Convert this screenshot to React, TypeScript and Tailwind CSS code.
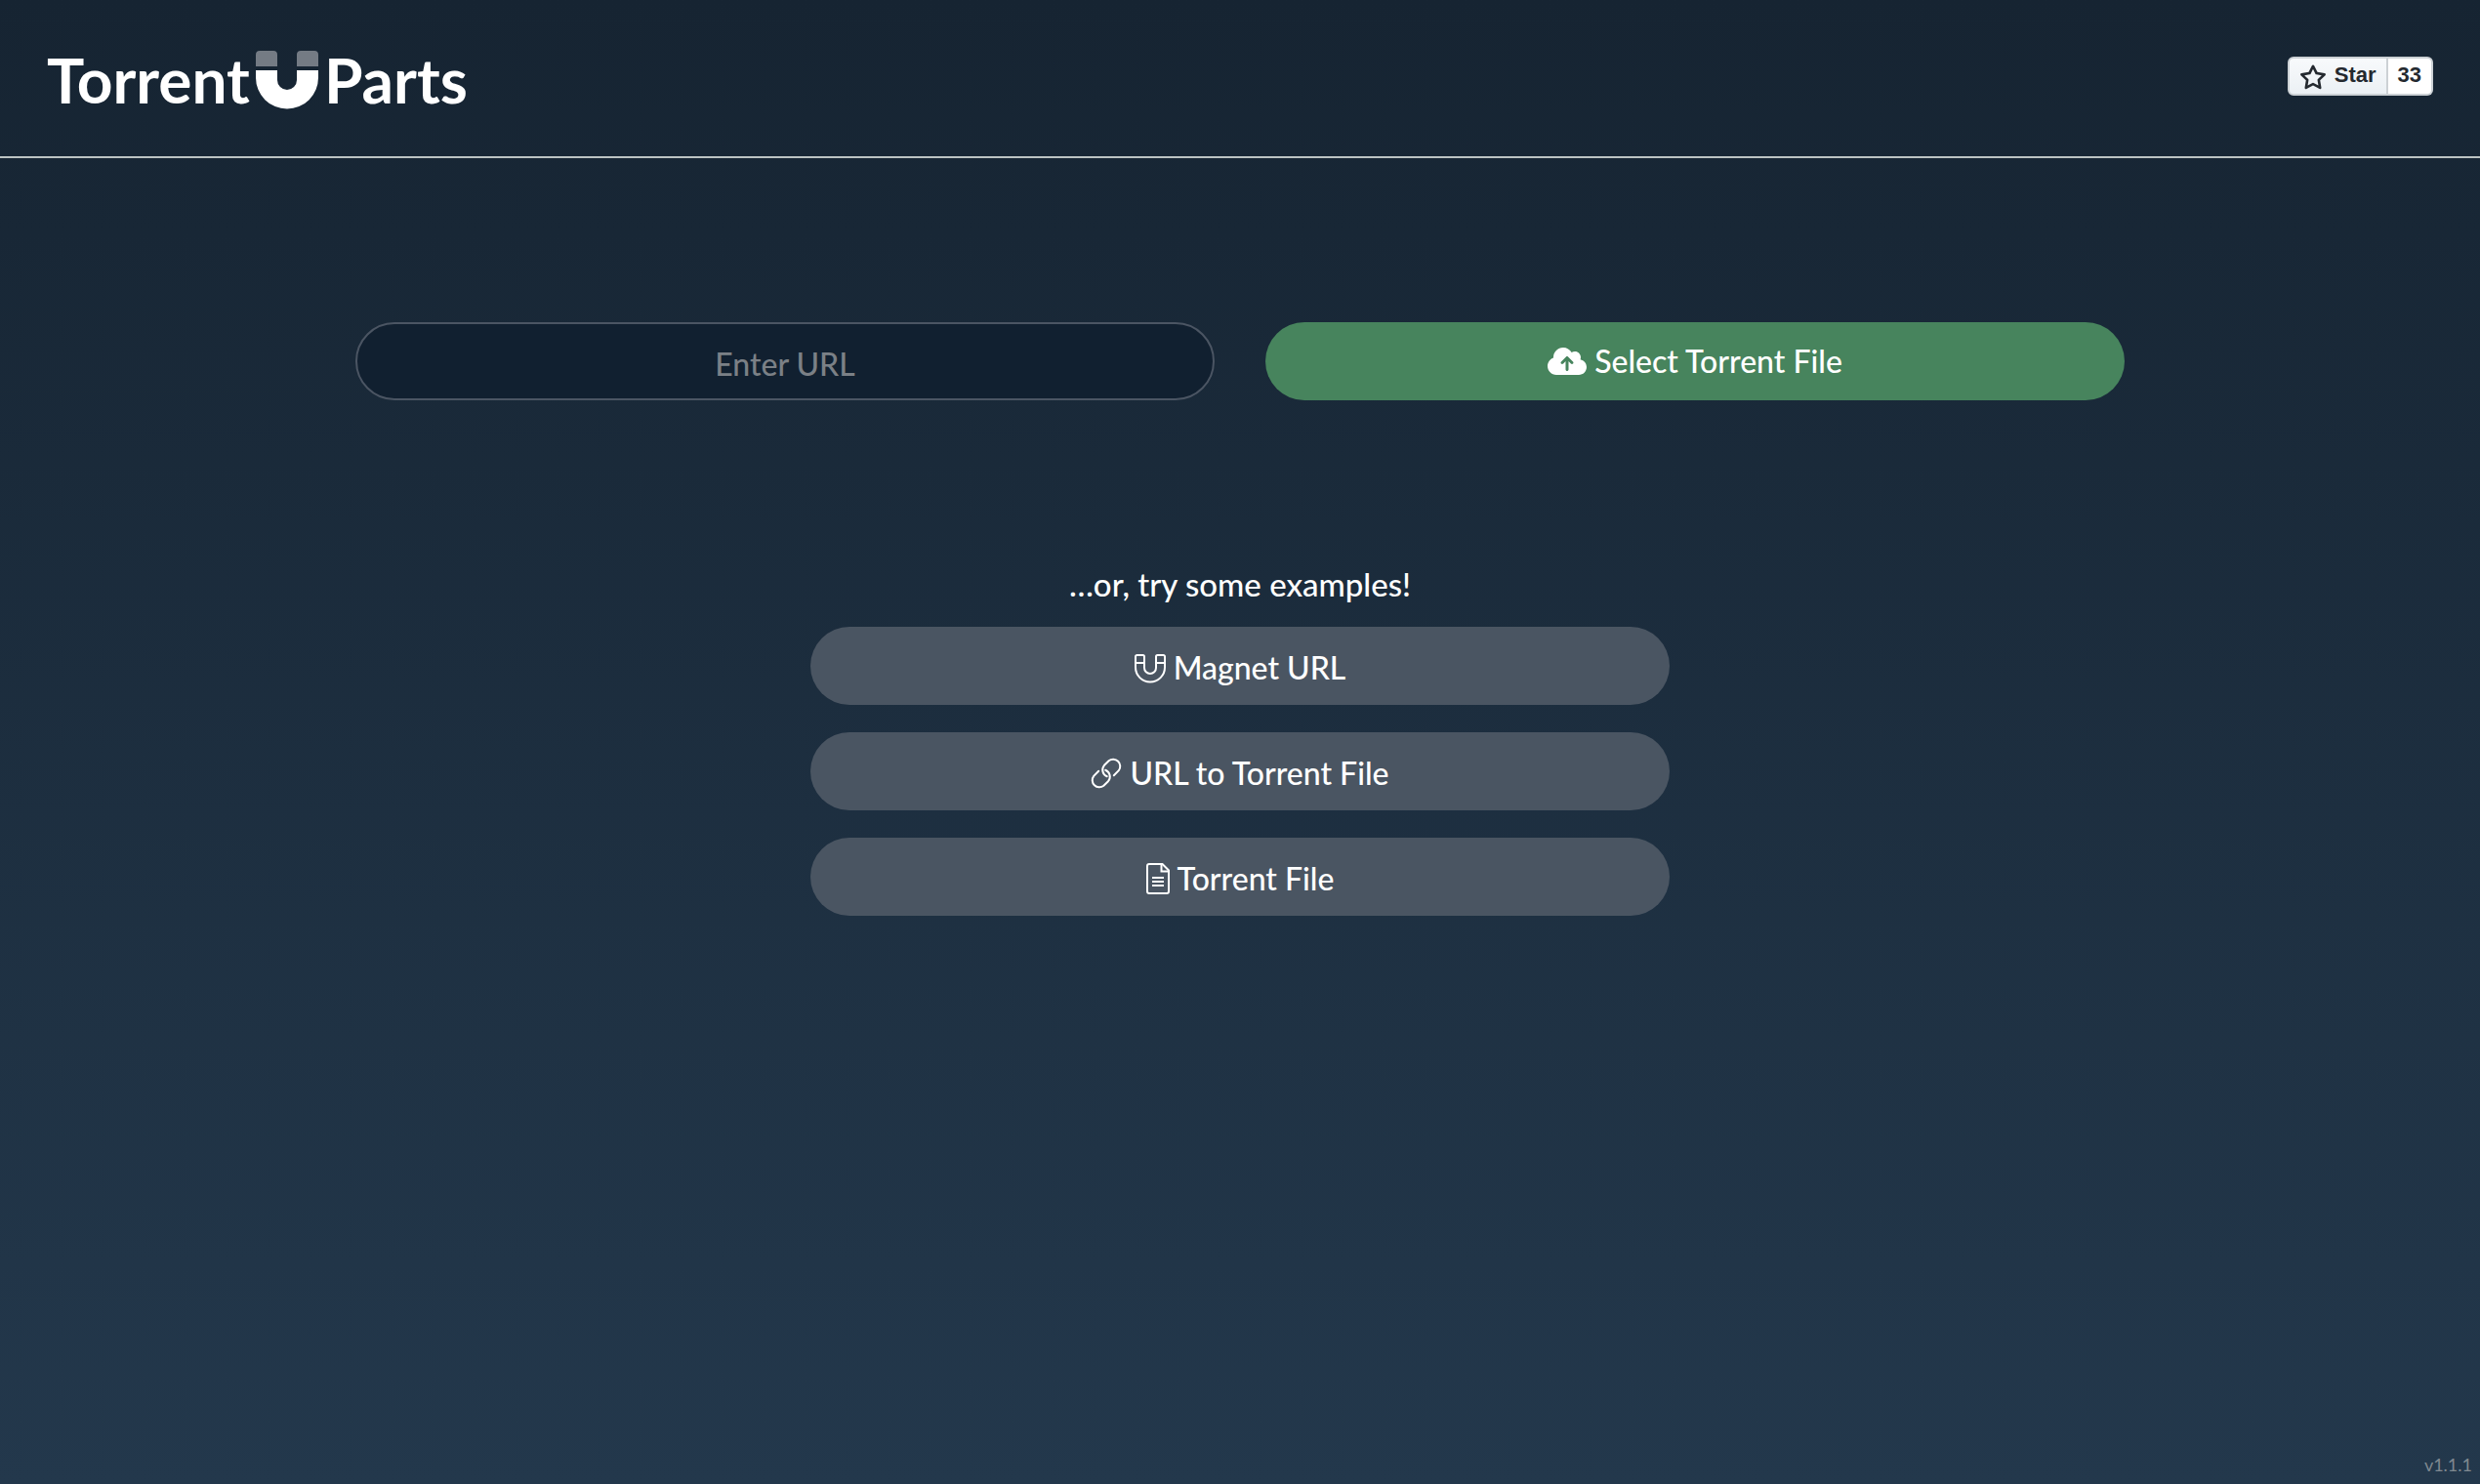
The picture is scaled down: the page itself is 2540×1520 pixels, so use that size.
import React, { useRef, useState } from 'react';
import { FaCloudArrowUp } from 'react-icons/fa6';

const version = 'v1.1.1';

const LogoMagnet: React.FC = () => (
  <svg viewBox="0 0 64 64" className="size-16" aria-hidden="true">
    <path fill="#747b84" d="M0 20V8a4 4 0 0 1 4-4h14a4 4 0 0 1 4 4v12zM42 20V8a4 4 0 0 1 4-4h14a4 4 0 0 1 4 4v12z" />
    <path fill="#fff" d="M0 24h22v10a10 10 0 0 0 20 0V24h22v7.500a32 32 0 0 1-64 0z" />
  </svg>
);

const MagnetIcon: React.FC = () => (
  <svg viewBox="0 0 32 32" className="size-8" fill="none" stroke="currentColor" strokeWidth="2" aria-hidden="true">
    <path d="M1 15.500V4.500A1.500 1.500 0 0 1 2.500 3h6A1.500 1.500 0 0 1 10 4.500V16a6 6 0 0 0 12 0V4.500A1.500 1.500 0 0 1 23.500 3h6A1.500 1.500 0 0 1 31 4.500v11a15 15 0 0 1-30 0z" />
    <path d="M1 11h9M22 11h9" />
  </svg>
);

const LinkIcon: React.FC = () => (
  <svg viewBox="0 0 32 32" className="size-8" fill="none" stroke="currentColor" strokeWidth="2" strokeLinecap="round" aria-hidden="true">
    <path d="M23.800 18.200l5-5A7.200 7.200 0 0 0 18.600 3.200L14 7.800A7.200 7.200 0 0 0 16.800 19.200" />
    <path d="M8.200 13.800l-5 5A7.200 7.200 0 0 0 13.400 28.800L18 24.200A7.200 7.200 0 0 0 15.200 12.800" />
  </svg>
);

const FileIcon: React.FC = () => (
  <svg viewBox="0 0 24 32" className="h-8 w-6" fill="none" stroke="currentColor" strokeWidth="2" aria-hidden="true">
    <path d="M3 1h13.500L23 7.500V29a2 2 0 0 1-2 2H3a2 2 0 0 1-2-2V3a2 2 0 0 1 2-2z" />
    <path d="M15.500 1v7.500H23M6 15h12M6 19h12M6 23h12" />
  </svg>
);

const StarIcon: React.FC = () => (
  <svg viewBox="0 0 16 16" className="mt-1.5 size-7" fill="currentColor" aria-hidden="true">
    <path d="M8 .25a.75.75 0 0 1 .673.418l1.882 3.815 4.210.612a.75.75 0 0 1 .416 1.279l-3.046 2.970.719 4.192a.751.751 0 0 1-1.088.791L8 12.347l-3.766 1.980a.75.75 0 0 1-1.088-.790l.720-4.194L.818 6.374a.75.75 0 0 1 .416-1.280l4.210-.611L7.327.668A.75.75 0 0 1 8 .250Zm0 2.445L6.615 5.500a.75.75 0 0 1-.564.410l-3.097.450 2.240 2.184a.75.75 0 0 1 .216.664l-.528 3.084 2.769-1.456a.75.75 0 0 1 .698 0l2.770 1.456-.530-3.084a.75.75 0 0 1 .216-.664l2.240-2.183-3.096-.450a.75.75 0 0 1-.564-.410L8 2.694Z" />
  </svg>
);

const examples = [
  { label: 'Magnet URL', icon: <MagnetIcon /> },
  { label: 'URL to Torrent File', icon: <LinkIcon /> },
  { label: 'Torrent File', icon: <FileIcon /> },
];

const App: React.FC = () => {
  const [url, setUrl] = useState<string>('');
  const fileInput = useRef<HTMLInputElement>(null);

  return (
    <div className="flex min-h-screen flex-col bg-linear-to-b from-[#162432] to-[#23384c] font-['Lato',sans-serif] text-[32px] leading-10 font-medium text-white">
      {/* Header */}
      <header className="flex h-[162px] items-center justify-between border-b-2 border-[#bcc3c3] px-12">
        <h1>
          <a href="#" className="flex items-center gap-1.5 text-[64px] leading-none font-bold">
            <span className="pt-1">Torrent</span>
            <LogoMagnet />
            <span className="pt-1">Parts</span>
          </a>
        </h1>
        <div className="mb-1 flex h-10 font-['Liberation_Sans',Arial,sans-serif] text-[22px] leading-[34px] font-bold text-[#24292f]">
          <a href="#star" className="flex gap-2 rounded-l-md border-2 border-[#ccd1d5] bg-linear-to-b from-[#f8fafc] to-[#ebf0f4] px-2.5">
            <StarIcon />
            Star
          </a>
          <a href="#stargazers" className="rounded-r-md border-2 border-l-0 border-[#ccd1d5] bg-white px-2.5">
            33
          </a>
        </div>
      </header>

      <main className="mx-auto w-full max-w-[1812px]">
        {/* Torrent sources */}
        <div className="mt-42 grid grid-cols-2 gap-13">
          <input
            type="text"
            aria-label="Torrent URL"
            placeholder="Enter URL"
            value={url}
            onChange={(e) => setUrl(e.target.value)}
            className="h-20 w-full rounded-full border-2 border-[#4b5563] bg-[#112030] px-8 pt-1 text-center placeholder:text-[#7b8086] focus:outline-none"
          />
          <button
            type="button"
            onClick={() => fileInput.current?.click()}
            className="flex h-20 items-center justify-center gap-2 rounded-full bg-[#47845d]"
          >
            <FaCloudArrowUp className="h-8 w-10" />
            Select Torrent File
          </button>
          <input ref={fileInput} type="file" accept=".torrent" aria-label="Torrent file" className="hidden" />
        </div>

        {/* Examples */}
        <div className="mx-auto mt-42 flex w-full max-w-[880px] flex-col gap-7">
          <p className="-mb-3.5 h-[50px] text-center text-[33px] leading-10">…or, try some examples!</p>
          {examples.map(({ label, icon }) => (
            <button
              key={label}
              type="button"
              className="flex h-20 items-center justify-center gap-2 rounded-full bg-[#4a5562] pt-1"
            >
              {icon}
              {label}
            </button>
          ))}
        </div>
      </main>

      <footer className="mt-auto px-2 pb-1 text-right text-[18px] leading-8 font-normal text-[#7f8890]">{version}</footer>
    </div>
  );
};

export default App;
